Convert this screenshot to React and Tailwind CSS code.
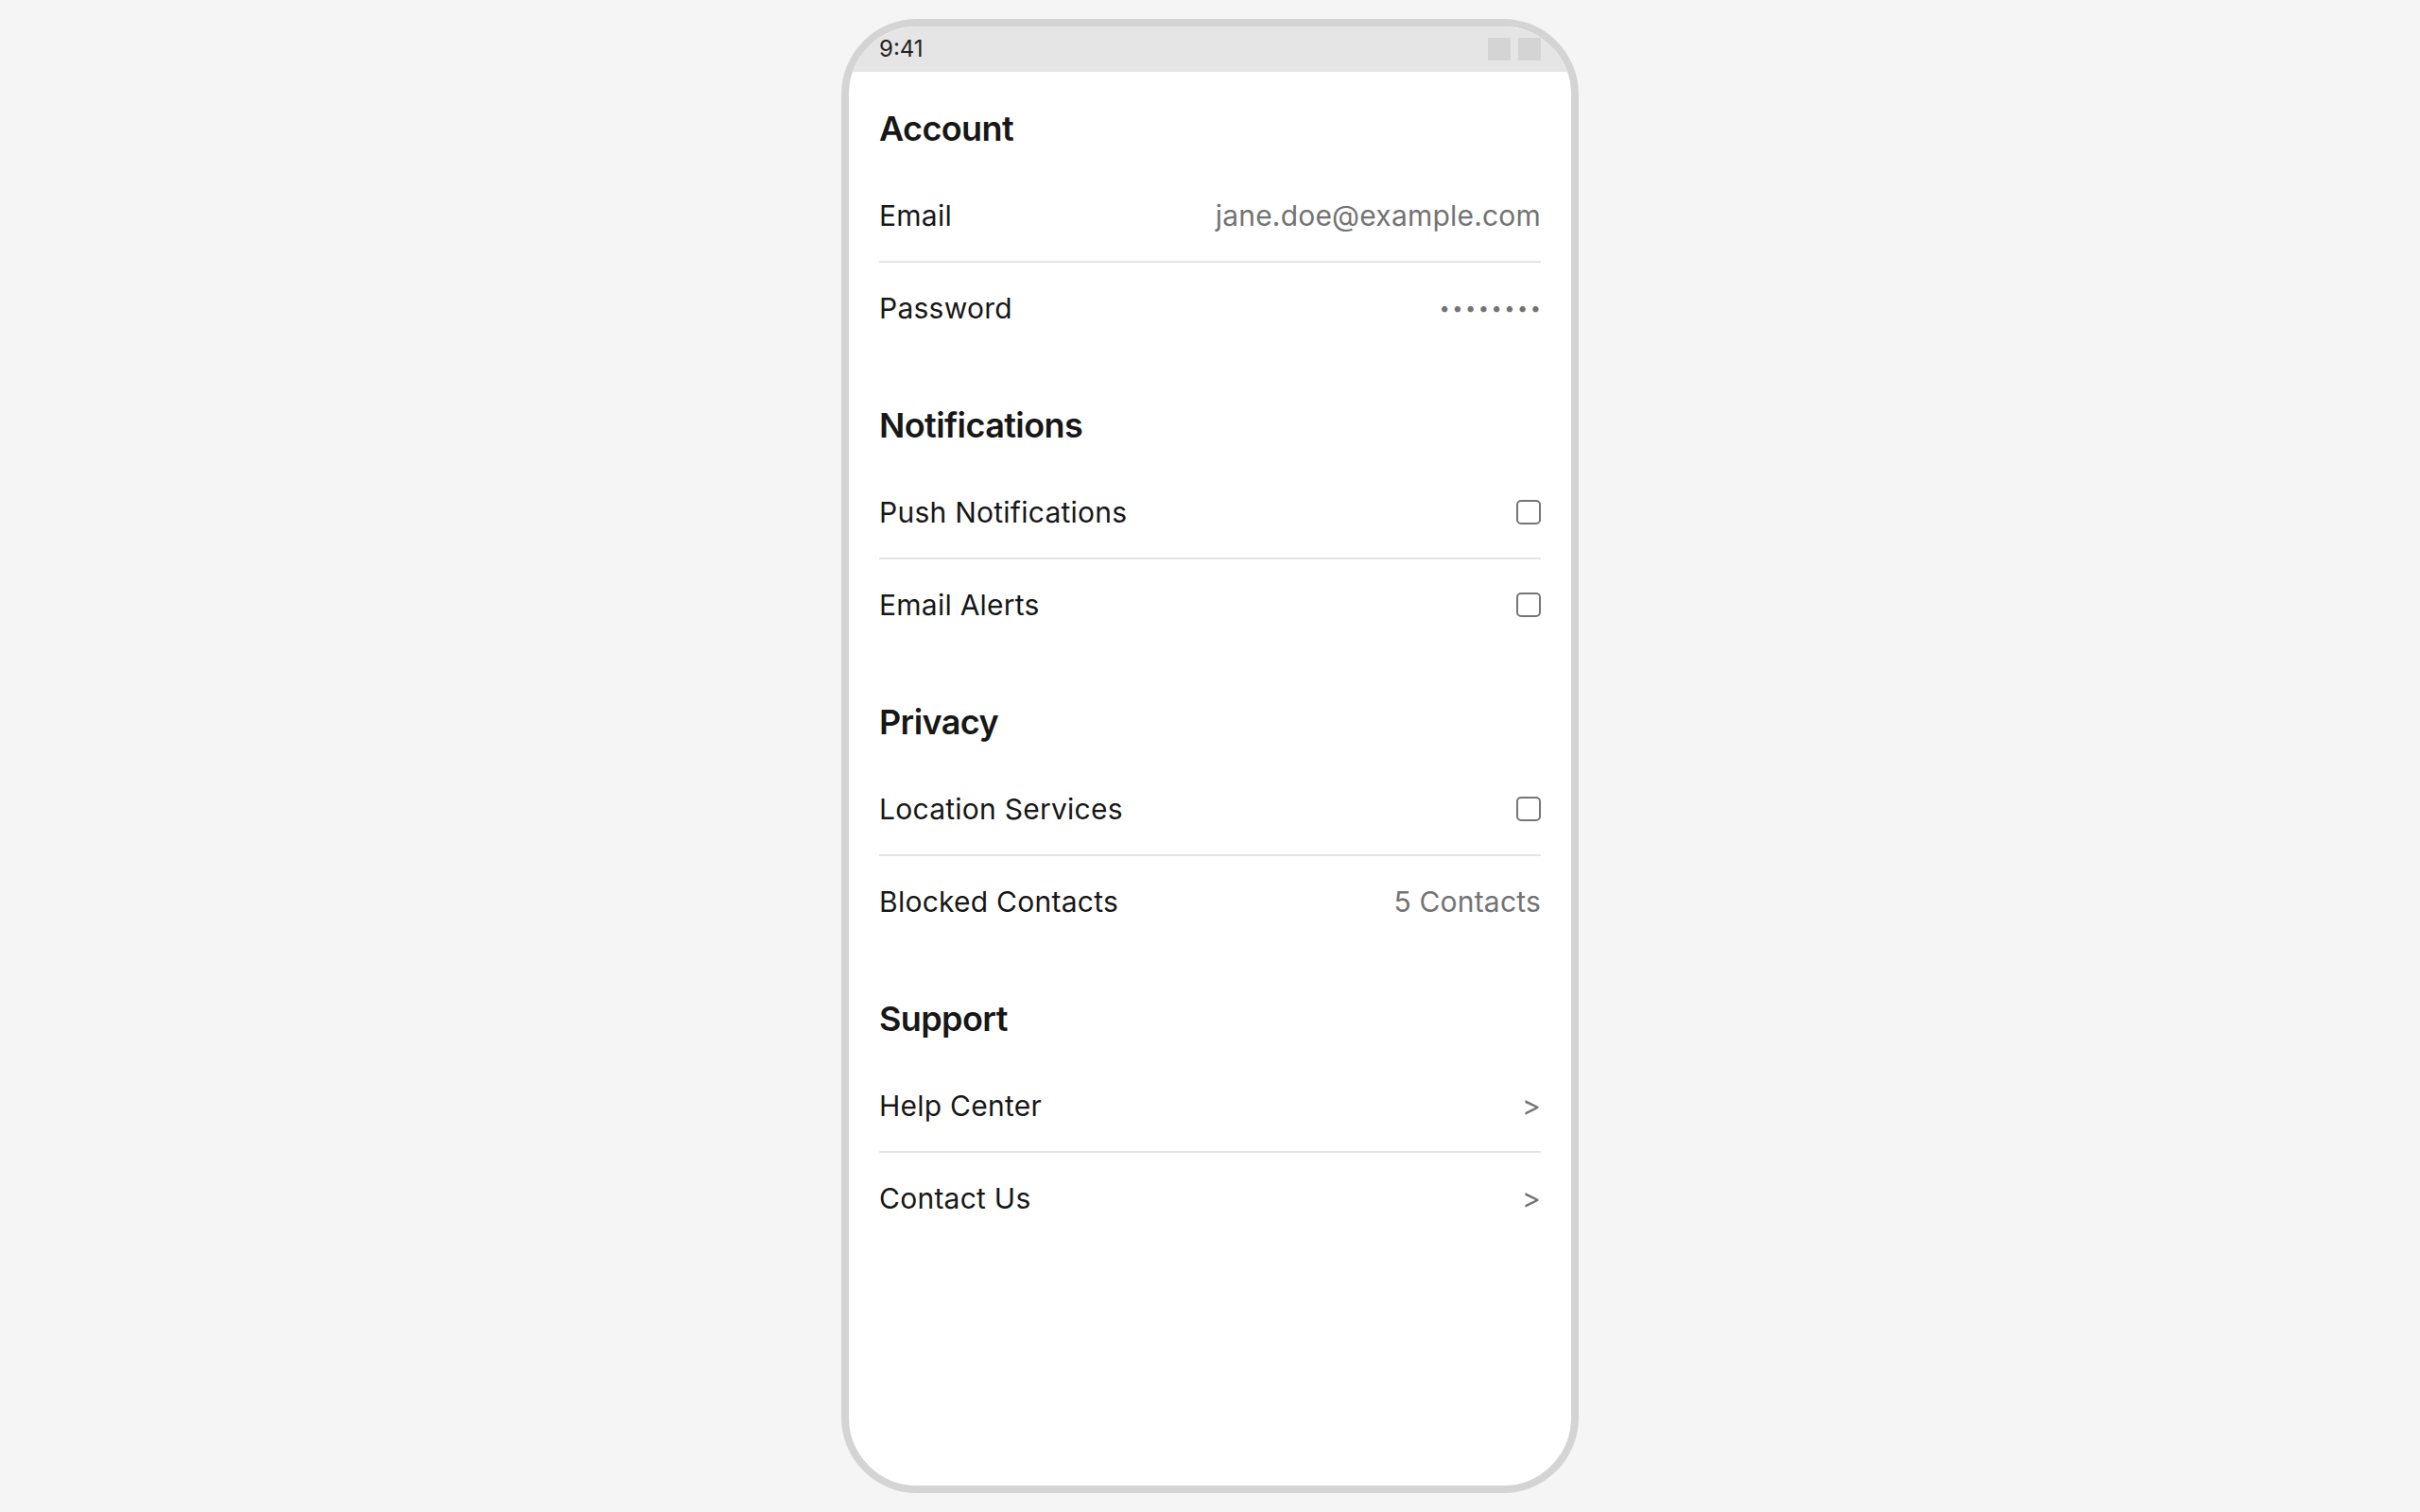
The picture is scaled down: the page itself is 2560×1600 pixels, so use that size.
import React from "react";

const font = { fontFamily: "Inter, 'Noto Sans', sans-serif" };

function Checkbox() {
  return <span className="block w-[26px] h-[26px] rounded-[5px] border-2 border-[#767676] bg-white" />;
}

function Row({ label, right, last }) {
  return (
    <div className={`flex items-center justify-between py-6 ${last ? "" : "border-b-2 border-[#e5e5e5]"}`}>
      <span className="text-[30px] leading-[48px] tracking-[0.25px] text-[#171717]">{label}</span>
      {right}
    </div>
  );
}

function Section({ title, children, last }) {
  return (
    <section className={last ? "" : "mb-12"}>
      <h2 className="text-[36px] leading-[56px] font-semibold tracking-[-0.6px] text-[#171717] mb-4">{title}</h2>
      <div className="flex flex-col">{children}</div>
    </section>
  );
}

const gray = "text-[30px] leading-[48px] tracking-[0.2px] text-[#737373]";

export default function App() {
  return (
    <div className="w-full h-[1600px] bg-[#f5f5f5] flex items-center justify-center" style={font}>
      <div className="w-[780px] h-[1560px] rounded-[80px] border-8 border-[#d4d4d4] bg-white overflow-hidden flex flex-col">
        <div className="h-[48px] shrink-0 bg-[#e5e5e5] flex items-center justify-between px-8">
          <span className="text-[24px] leading-[32px] text-[#222222]">9:41</span>
          <div className="flex gap-2">
            <span className="block w-6 h-6 bg-[#d4d4d4]" />
            <span className="block w-6 h-6 bg-[#d4d4d4]" />
          </div>
        </div>
        <div className="px-8 pt-8 flex flex-col">
          <Section title="Account">
            <Row label="Email" right={<span className={gray}>jane.doe@example.com</span>} />
            <Row
              label="Password"
              last
              right={<span className="text-[20px] leading-[48px] tracking-[2.5px] text-[#737373] -mr-[2.5px]">••••••••</span>}
            />
          </Section>
          <Section title="Notifications">
            <Row label="Push Notifications" right={<Checkbox />} />
            <Row label="Email Alerts" last right={<Checkbox />} />
          </Section>
          <Section title="Privacy">
            <Row label="Location Services" right={<Checkbox />} />
            <Row label="Blocked Contacts" last right={<span className={gray}>5 Contacts</span>} />
          </Section>
          <Section title="Support" last>
            <Row label="Help Center" right={<span className={gray}>&gt;</span>} />
            <Row label="Contact Us" last right={<span className={gray}>&gt;</span>} />
          </Section>
        </div>
      </div>
    </div>
  );
}
